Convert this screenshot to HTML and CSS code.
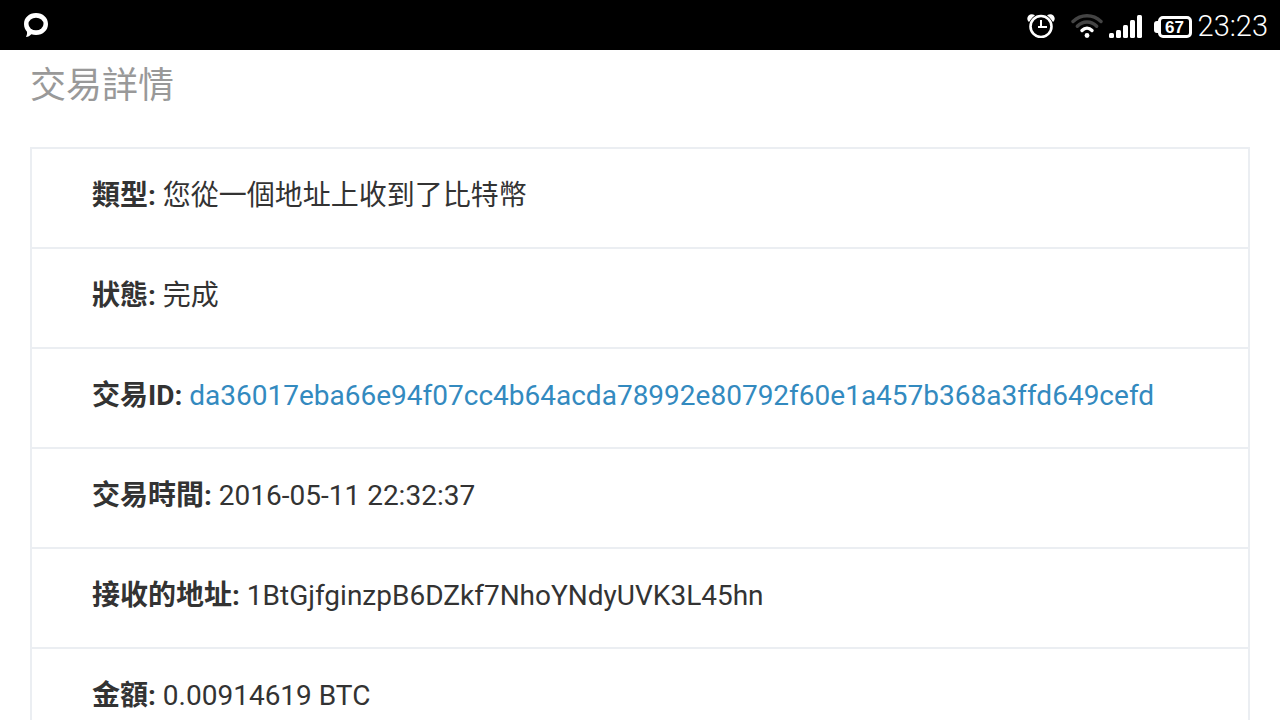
FILE: index.html
```html
<!DOCTYPE html>
<html lang="zh-Hant">
<head>
  <meta charset="UTF-8">
  <meta name="viewport" content="width=device-width, initial-scale=1.0">
  <title>交易詳情</title>
  <link rel="stylesheet" href="styles.css">
</head>
<body>
  <header class="status-bar">
    <svg class="chat-icon" width="24" height="24" viewBox="0 0 24 24">
      <path fill="#fff" d="M12 0C5 0 0 4.700 0 11c0 3.500 1.400 6 3 7.700.3 2-.3 3.800-1 5.300 2 0 4-1.200 5.300-2.700 1.500.5 3 .7 4.700.7 7 0 12-4.700 12-11S19 0 12 0z"/>
      <ellipse cx="12" cy="11" rx="7.500" ry="6.300" fill="#000"/>
    </svg>
    <div class="status-icons">
      <svg width="28" height="24" viewBox="0 0 28 24">
        <path fill="#fff" d="M1 7C-1.500 3 3-1.500 7.500 1L8 2 2 8zM27 7c2.500-4-2-8.500-6.500-6L20 2l6 6z"/>
        <circle cx="14" cy="12.500" r="12.400" fill="#000"/>
        <circle cx="14" cy="12.500" r="10.500" fill="none" stroke="#fff" stroke-width="2.600"/>
        <path fill="none" stroke="#fff" stroke-width="2" d="M14 6v8M11 13h9"/>
      </svg>
      <svg class="wifi" width="32" height="24" viewBox="0 0 32 24" fill="none" stroke-linecap="round" stroke-width="3.400">
        <path stroke="#444" d="M2 7.500c8-7.700 20-7.700 28 0"/>
        <path stroke="#444" d="M6.300 12.300c5.500-5.700 13.900-5.700 19.400 0"/>
        <path stroke="#fff" d="M11 16.500c3-3 7-3 10 0"/>
        <circle cx="16" cy="21.500" r="2.400" fill="#fff"/>
      </svg>
      <svg class="signal" width="33" height="24" viewBox="0 0 33 24" fill="#fff">
        <rect x="0" y="19" width="5" height="5" rx="1.500"/>
        <rect x="7" y="16" width="5" height="8" rx="1.500"/>
        <rect x="14" y="11" width="5" height="13" rx="1.500"/>
        <rect x="21" y="6" width="5" height="18" rx="1.500"/>
        <rect x="28" y="1" width="5" height="23" rx="1.500"/>
      </svg>
      <div class="battery"><span>67</span></div>
      <span class="clock">23:23</span>
    </div>
  </header>

  <main class="container">
    <h1>交易詳情</h1>
    <ul class="details">
      <li><strong>類型:</strong> 您從一個地址上收到了比特幣</li>
      <li><strong>狀態:</strong> 完成</li>
      <li><strong>交易ID:</strong> <a href="#">da36017eba66e94f07cc4b64acda78992e80792f60e1a457b368a3ffd649cefd</a></li>
      <li><strong>交易時間:</strong> 2016-05-11 22:32:37</li>
      <li><strong>接收的地址:</strong> 1BtGjfginzpB6DZkf7NhoYNdyUVK3L45hn</li>
      <li><strong>金額:</strong> 0.00914619 BTC</li>
    </ul>
  </main>
</body>
</html>
```
FILE: styles.css
```css
* {
  box-sizing: border-box;
}

body {
  margin: 0;
  background: #fff;
  color: #333;
  font-family: Roboto, "Noto Sans CJK TC", sans-serif;
  font-size: 28px;
  line-height: 40px;
}

.status-bar {
  display: flex;
  justify-content: space-between;
  align-items: center;
  height: 50px;
  padding: 0 12px 0 24px;
  background: #000;
  color: #fff;
}

.status-icons {
  display: flex;
  align-items: center;
  padding-top: 2px;
}

.wifi {
  margin: 0 6px 0 16px;
}

.signal {
  margin-right: 12px;
}

.battery {
  display: flex;
  align-items: center;
  margin: 2px 6px 0 0;
}

/* battery tip on the left side */
.battery::before {
  content: "";
  width: 4px;
  height: 12px;
  background: #fff;
  border-radius: 3px 0 0 3px;
}

.battery span {
  width: 34px;
  height: 22px;
  border: 3px solid #fff;
  border-radius: 5px;
  font-family: "Liberation Sans", Arial, sans-serif;
  font-size: 17px;
  font-weight: bold;
  line-height: 17px;
  text-align: center;
}

.clock {
  font-size: 29px;
  font-weight: 300;
}

.container {
  padding: 11px 30px 0;
}

h1 {
  margin: 0 0 36px;
  color: #999;
  font-size: 36px;
  font-weight: normal;
  line-height: 50px;
}

.details {
  margin: 0;
  padding: 0;
  border: 2px solid #ebeef2;
  list-style: none;
}

.details li {
  padding: 27px 60px 31px;
  border-bottom: 2px solid #ebeef2;
}

.details li:last-child {
  border-bottom: none;
}

.details a {
  color: #338abf;
  text-decoration: none;
}
```
